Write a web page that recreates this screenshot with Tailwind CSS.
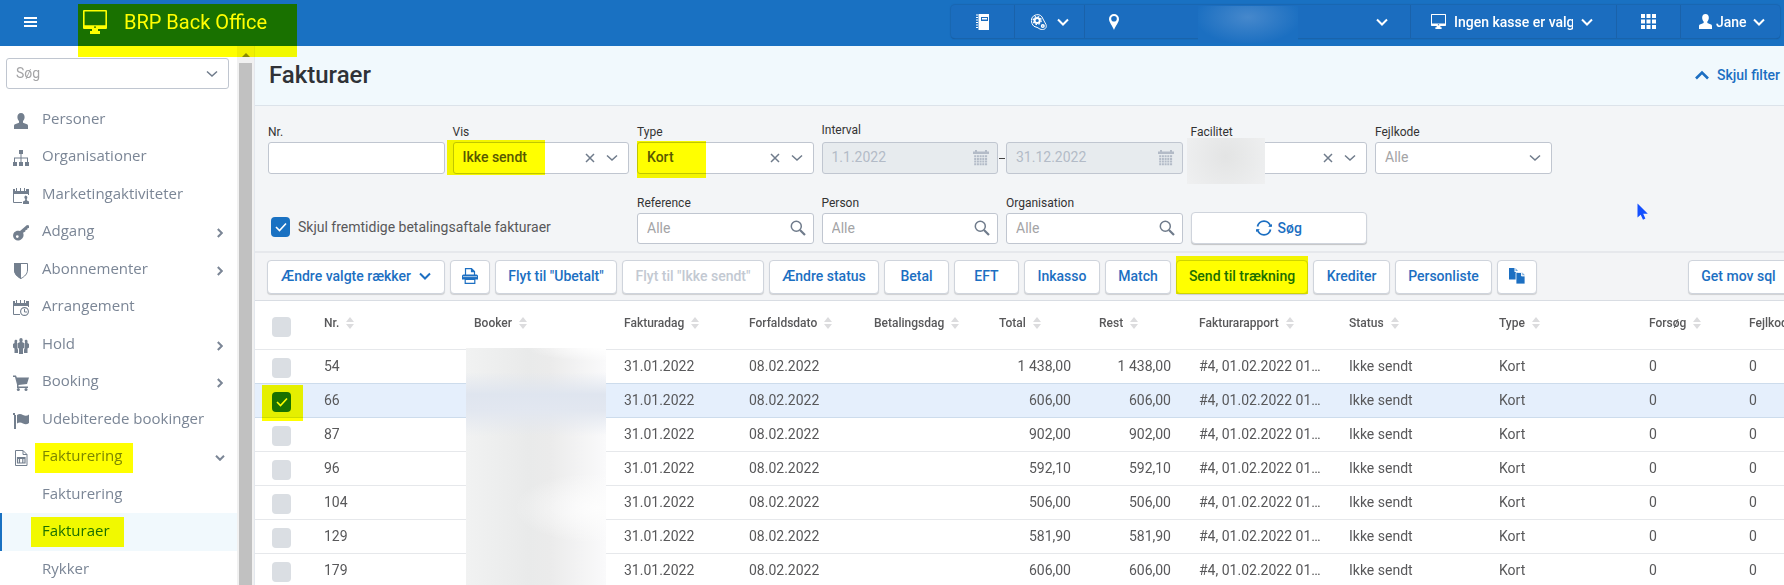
<!DOCTYPE html>
<html lang="da">
<head>
<meta charset="utf-8">
<title>BRP Back Office – Fakturaer</title>
<script src="https://cdn.jsdelivr.net/npm/@tailwindcss/browser@4"></script>
</head>
<body class="flex h-screen flex-col overflow-hidden bg-white font-['Roboto',sans-serif] text-sm text-[#58585a]">

<svg class="hidden" aria-hidden="true">
  <symbol id="chev" viewBox="0 0 12 8"><path d="M1 1.5l5 5 5-5" fill="none" stroke="currentColor" stroke-width="2"/></symbol>
  <symbol id="chev-thin" viewBox="0 0 12 8"><path d="M1 1.5l5 4.5 5-4.5" fill="none" stroke="currentColor" stroke-width="1.5"/></symbol>
  <symbol id="chev-nav" viewBox="0 0 10 6"><path d="M1 .8l4 4 4-4" fill="none" stroke="currentColor" stroke-width="2"/></symbol>
  <symbol id="cross" viewBox="0 0 10 10"><path d="M1 1l8 8M9 1l-8 8" fill="none" stroke="currentColor" stroke-width="1.5"/></symbol>
  <symbol id="check" viewBox="0 0 12 10"><path d="M1 5l3.5 3.5L11 1.5" fill="none" stroke="currentColor" stroke-width="1.6"/></symbol>
  <symbol id="search" viewBox="0 0 16 16"><circle cx="6.3" cy="6.3" r="5" fill="none" stroke="currentColor" stroke-width="1.5"/><path d="M10 10l5 5" stroke="currentColor" stroke-width="2.2"/></symbol>
  <symbol id="monitor" viewBox="0 0 24 24"><path d="M1 0h22q1 0 1 1v17q0 1-1 1h-8v2h2v3H7v-3h2v-2H1q-1 0-1-1V1q0-1 1-1zm.6 1.6v13.6h20.8V1.600zM11 16.500v1.300h2v-1.300z" fill="currentColor" fill-rule="evenodd"/></symbol>
  <symbol id="person" viewBox="0 0 14 16"><path d="M7 0c2.400 0 3.600 1.700 3.600 4 0 1.700-.6 3-1.600 4v1.700l4 1.600c.8.4 1 1 1 2V16H0v-2.700c0-1 .2-1.600 1-2l4-1.600V8C4 7 3.400 5.700 3.400 4 3.400 1.700 4.600 0 7 0z" fill="currentColor"/></symbol>
  <symbol id="cal" viewBox="0 0 16 16"><path d="M0 1.500h2V0h2v1.500h8V0h2v1.500h2V4H0z" fill="currentColor"/><g fill="none" stroke="currentColor" stroke-width="2" stroke-dasharray="2 .7"><path d="M1.200 6.200h13.600M1.200 8.900h13.600M1.200 11.600h13.600M1.200 14.300h13.600"/></g></symbol>
  <symbol id="sort" viewBox="0 0 8 12"><path d="M4 0l4 5H0zM4 12l4-5H0z" fill="currentColor"/></symbol>
  <symbol id="org" viewBox="0 0 16 16"><path d="M6 0h4v4H8.500v3.500H15V12h1v4h-4v-4h2V8.500H8.500V12H10v4H6v-4h1.500V8.500H2V12h2v4H0v-4h1V7.500h6.500V4H6z" fill="currentColor"/></symbol>
  <symbol id="cal-person" viewBox="0 0 16 16"><path d="M.5 2v12.500H9M15.500 2v5M.5 5.500h15" fill="none" stroke="currentColor"/><path d="M0 1h2v2h1V0h1v3h3V0h1v3h3V0h1v3h1V1h3v4H0z" fill="currentColor"/><path d="M12.500 7.500a2 2 0 0 1 1.200 3.500l.3 1.500 2 1V16h-6v-2.500l2-1 .3-1.500a2 2 0 0 1 .2-3.500z" fill="currentColor"/></symbol>
  <symbol id="cal-clock" viewBox="0 0 16 16"><path d="M.5 2v12.500H7M15.500 2v5M.5 5.500h15" fill="none" stroke="currentColor"/><path d="M0 1h2v2h1V0h1v3h3V0h1v3h3V0h1v3h1V1h3v4H0z" fill="currentColor"/><circle cx="11.500" cy="11.500" r="3.900" fill="none" stroke="currentColor" stroke-width="1.100"/><path d="M11.500 9v3h2.500" fill="none" stroke="currentColor"/></symbol>
  <symbol id="key" viewBox="0 0 16 16"><path d="M14 0l2 .5V3l-1.500.3-.3 1.500-1.600.2-.3 1.600-2.200 1.200c1 2.500.3 4.800-1.500 6.200C6.300 16 3.500 16 1.800 14.300-.3 12.300-.5 9.300 1.300 7.300c1.500-1.700 3.700-2 5.700-1.200zM4.300 10.200a1.400 1.400 0 1 0 0 2.800 1.400 1.400 0 0 0 0-2.800z" fill="currentColor" fill-rule="evenodd"/></symbol>
  <symbol id="shield" viewBox="0 0 14 16"><path d="M.5.5h13V7c0 4-3 6.500-6.500 8.500C3.500 13.500.5 11 .5 7z" fill="none" stroke="currentColor"/><path d="M7 0v16C3 14 0 11 0 7V0z" fill="currentColor"/></symbol>
  <symbol id="group" viewBox="0 0 16 16"><path d="M6.300 2a1.700 2 0 1 1 3.400 0c0 .9-.3 1.500-.7 2l2 1v5l-1 .5V16H6v-5.500L5 10V5l2-1c-.4-.5-.7-1.100-.7-2zM1.500 3a1.400 1.500 0 1 1 2.600 1l-.2.800.6.400v5.800l.5.500V15H1.500v-4.500L0 9.500V6l1.500-1zM14.500 3a1.400 1.500 0 1 0-2.600 1l.2.800-.6.400v5.800l-.5.500V15h3.500v-4.500l1.500-1V6l-1.500-1z" fill="currentColor"/></symbol>
  <symbol id="cart" viewBox="0 0 16 16"><path d="M0 .5h3l.8 2H16l-2 6.500-8.500 1v1.500H15V13H4V9.500L2 2H0z" fill="currentColor"/><circle cx="5.300" cy="14.500" r="1.500" fill="currentColor"/><circle cx="13" cy="14.500" r="1.500" fill="currentColor"/></symbol>
  <symbol id="flag" viewBox="0 0 16 16"><path d="M1 2h2v14H1zM0 0h2v2H0zM4 2c2-1.500 4-1.300 6 0 2 1 4 1 6-.5v8.500c-2 1.500-4 1.500-6 .5-2-1.300-4-1.500-6 0z" fill="currentColor"/></symbol>
  <symbol id="doc" viewBox="0 0 14 16"><path d="M1.500.5h7.500l4 4v11H1.500zM9 .5v4h4" fill="none" stroke="currentColor"/><path d="M3.500 7.500h7.500v5.500H3.500zM3 8.500h8.500M5.500 9v4M8.800 9v4" fill="none" stroke="currentColor" stroke-width="1.200"/></symbol>
</svg>

<!-- Top bar -->
<header class="flex h-[46px] shrink-0 items-start bg-[#1971c2] pr-1 text-white">
  <button aria-label="Menu" class="mt-[17px] ml-6 flex w-[13px] flex-col gap-[2px]">
    <span class="h-[2px] w-full bg-white"></span><span class="h-[2px] w-full bg-white"></span><span class="h-[2px] w-full bg-white"></span>
  </button>
  <a href="#" class="relative mt-1 ml-[41px] flex h-[53px] w-[219px] items-start pt-1.5 pl-[5px]">
    <svg class="h-6 w-6"><use href="#monitor"/></svg>
    <span class="ml-[17px] text-xl leading-6">BRP Back Office</span>
    <span class="absolute inset-0 z-10 bg-[#ffff00] mix-blend-multiply"></span>
  </a>
  <div class="mt-[5px] ml-auto flex h-[33px] items-stretch divide-x divide-[#1a62aa] rounded bg-[#1b6dbf] text-sm font-medium shadow-[0_0_1px_1px_#1a66b0,0_1px_1px_#174f8a]">
    <button aria-label="Kassebog" class="flex w-16 items-center justify-center">
      <svg class="h-4 w-3.5" viewBox="0 0 14 16"><path d="M2.500 0H13v16H2.500zM5 3v4h7V3z" fill="currentColor" fill-rule="evenodd"/><path d="M6 4h5v1.500H6z" fill="currentColor"/><path d="M0 1h2M0 3.500h2M0 6h2M0 8.500h2M0 11h2M0 13.500h2" stroke="currentColor" stroke-width="1.200"/></svg>
    </button>
    <button aria-label="Indstillinger" class="flex w-[70px] items-center justify-center gap-2.5">
      <svg class="size-4" viewBox="0 0 16 16" fill="none" stroke="currentColor"><path d="M1 9.500A6 6 0 0 1 5.500 .7C9 .2 11 2 12 5l3 5.500c1 3-.8 5-3.500 5-2 0-3-.5-4.500-1.700L3 12.300C2 11.500 1.300 10.500 1 9.500z"/><circle cx="6.200" cy="6.500" r="2.600" stroke-width="2"/><circle cx="6.200" cy="6.500" r="4" stroke-width="1.300" stroke-dasharray="1.600 1.540"/><circle cx="11.800" cy="12" r="1.300" stroke-width="1.500"/></svg>
      <svg class="h-2 w-3"><use href="#chev"/></svg>
    </button>
    <button aria-label="Facilitet" class="relative flex w-[326px] items-center justify-between pr-[22px] pl-6">
      <svg class="h-4 w-2.5" viewBox="0 0 10 16"><path d="M5 0a5 5 0 0 1 5 5c0 3.500-3.500 6.500-5 11C3.500 11.500 0 8.500 0 5a5 5 0 0 1 5-5zm0 2a2.800 2.800 0 1 0 0 5.600A2.800 2.800 0 0 0 5 2z" fill="currentColor" fill-rule="evenodd"/></svg>
      <svg class="h-2 w-3"><use href="#chev"/></svg>
      <span class="absolute top-px left-[113px] h-[37px] w-[100px] bg-[radial-gradient(ellipse_at_50%_30%,#4688cc,#1b6fc1_75%)]"></span>
    </button>
    <button class="flex w-[206px] items-center pl-5 whitespace-nowrap">
      <svg class="h-[15px] w-[15px] shrink-0"><use href="#monitor"/></svg>
      <span class="ml-2 w-[119px] overflow-hidden text-left">Ingen kasse er valgt</span>
      <svg class="ml-2 h-2 w-3"><use href="#chev"/></svg>
    </button>
    <button aria-label="Apps" class="flex w-16 items-center justify-center">
      <svg class="h-[15px] w-[15px]" viewBox="0 0 15 15" fill="currentColor"><path d="M0 0h4v4H0zM5.500 0h4v4h-4zM11 0h4v4h-4zM0 5.500h4v4H0zM5.500 5.500h4v4h-4zM11 5.500h4v4h-4zM0 11h4v4H0zM5.500 11h4v4h-4zM11 11h4v4h-4z"/></svg>
    </button>
    <button class="flex w-[99px] items-center pl-[18px]">
      <svg class="h-[15px] w-[13px]"><use href="#person"/></svg>
      <span class="ml-1">Jane</span>
      <svg class="ml-1.5 h-2 w-3"><use href="#chev"/></svg>
    </button>
  </div>
</header>

<div class="flex min-h-0 flex-1">
  <!-- Sidebar -->
  <aside class="flex w-[255px] shrink-0 border-r border-[#e4e8ee]">
    <div class="min-w-0 flex-1 overflow-hidden">
      <div class="relative mt-3 mr-2 ml-1.5">
        <select aria-label="Søg" class="block h-[31px] w-full appearance-none rounded-[3px] border border-[#c0c6d0] bg-white pb-0.5 pl-[9px] text-[#a4a4a6]"><option>Søg</option></select>
        <svg class="pointer-events-none absolute top-3 right-[11px] h-2 w-3 text-[#6f7b8b]"><use href="#chev-thin"/></svg>
      </div>
      <nav class="mt-3 font-['Open_Sans',sans-serif] text-[15px] text-[#7b8696]">
        <ul id="nav"></ul>
      </nav>
    </div>
    <div class="flex w-[17px] flex-col items-center bg-[#f1f1f1] pt-[7px]">
      <svg class="h-1 w-2" viewBox="0 0 8 4"><path d="M4 0l4 4H0z" fill="#8a8a8a"/></svg>
      <div class="mt-[6px] w-[13px] flex-1 bg-[#c1c1c1]"></div>
    </div>
  </aside>

  <main class="relative min-w-0 flex-1 overflow-hidden">
    <div class="flex h-[60px] items-center justify-between border-b border-[#dce3ea] bg-[#f1f9fd] pr-1 pb-0.5 pl-3.5">
      <h1 class="text-2xl font-medium text-[#2f3237]">Fakturaer</h1>
      <button class="flex items-center gap-2 font-medium text-[#1c6fc2]">
        <svg class="h-2.5 w-3.5 rotate-180" viewBox="0 0 14 10"><path d="M1 1.500l6 6 6-6" fill="none" stroke="currentColor" stroke-width="2.600"/></svg>
        Skjul filter
      </button>
    </div>

    <!-- Filters -->
    <form class="grid grid-cols-8 gap-x-2 gap-y-[21px] border-b-2 border-[#e6e8ec] bg-[#f3f5f7] pt-[18px] pr-12 pb-[7px] pl-[13px]" onsubmit="return false">
      <div class="flex flex-col gap-0.5">
        <label for="nr" class="text-xs leading-4 text-[#333]">Nr.</label>
        <input id="nr" class="h-8 w-full rounded-[3px] border border-[#c0c6d0] bg-white px-2">
      </div>
      <div class="flex flex-col gap-0.5">
        <label for="vis" class="text-xs leading-4 text-[#333]">Vis</label>
        <div class="relative">
          <select id="vis" class="block h-8 w-full appearance-none rounded-[3px] border border-[#c0c6d0] bg-white pb-0.5 pl-[9px] font-medium"><option>Ikke sendt</option></select>
          <button aria-label="Ryd" class="absolute top-[11px] right-[34px] text-[#6f7b8b]"><svg class="size-2.5"><use href="#cross"/></svg></button>
          <svg class="pointer-events-none absolute top-3 right-[11px] h-2 w-3 text-[#6f7b8b]"><use href="#chev-thin"/></svg>
          <span class="absolute -top-0.5 -left-1.5 h-[35px] w-[98px] bg-[#ffff00] mix-blend-multiply"></span>
        </div>
      </div>
      <div class="flex flex-col gap-0.5">
        <label for="type" class="text-xs leading-4 text-[#333]">Type</label>
        <div class="relative">
          <select id="type" class="block h-8 w-full appearance-none rounded-[3px] border border-[#c0c6d0] bg-white pb-0.5 pl-[9px] font-medium"><option>Kort</option></select>
          <button aria-label="Ryd" class="absolute top-[11px] right-[34px] text-[#6f7b8b]"><svg class="size-2.5"><use href="#cross"/></svg></button>
          <svg class="pointer-events-none absolute top-3 right-[11px] h-2 w-3 text-[#6f7b8b]"><use href="#chev-thin"/></svg>
          <span class="absolute -top-px left-0 h-[37px] w-[69px] bg-[#ffff00] mix-blend-multiply"></span>
        </div>
      </div>
      <div class="col-span-2 -mt-0.5 flex flex-col gap-1">
        <label for="fra" class="text-xs leading-4 text-[#333]">Interval</label>
        <div class="grid grid-cols-[1fr_8px_1fr] items-center">
          <div class="relative">
            <input id="fra" disabled value="1.1.2022" class="block h-8 w-full rounded-[3px] border border-[#c0c6d0] bg-[#e7ebee] px-[9px] pb-0.5 text-[#b3bbc7]">
            <svg class="absolute top-2 right-[9px] size-4 text-[#b3bbc7]"><use href="#cal"/></svg>
          </div>
          <span class="mx-auto h-px w-1.5 bg-[#444]"></span>
          <div class="relative">
            <input aria-label="Til" disabled value="31.12.2022" class="block h-8 w-full rounded-[3px] border border-[#c0c6d0] bg-[#e7ebee] px-[9px] pb-0.5 text-[#b3bbc7]">
            <svg class="absolute top-2 right-[9px] size-4 text-[#b3bbc7]"><use href="#cal"/></svg>
          </div>
        </div>
      </div>
      <div class="flex flex-col gap-0.5">
        <label for="fac" class="text-xs leading-4 text-[#333]">Facilitet</label>
        <div class="relative">
          <select id="fac" class="block h-8 w-full appearance-none rounded-[3px] border border-[#c0c6d0] bg-white"></select>
          <button aria-label="Ryd" class="absolute top-[11px] right-[34px] text-[#6f7b8b]"><svg class="size-2.5"><use href="#cross"/></svg></button>
          <svg class="pointer-events-none absolute top-3 right-[11px] h-2 w-3 text-[#6f7b8b]"><use href="#chev-thin"/></svg>
          <span class="absolute -top-1 -left-1 h-[46px] w-[78px] bg-[radial-gradient(circle_at_50%_40%,#e3e4e4,#eff0f1)]"></span>
        </div>
      </div>
      <div class="flex flex-col gap-0.5">
        <label for="fejl" class="text-xs leading-4 text-[#333]">Fejlkode</label>
        <div class="relative">
          <select id="fejl" class="block h-8 w-full appearance-none rounded-[3px] border border-[#c0c6d0] bg-white pb-0.5 pl-[9px] text-[#a4a4a6]"><option>Alle</option></select>
          <svg class="pointer-events-none absolute top-3 right-[11px] h-2 w-3 text-[#6f7b8b]"><use href="#chev-thin"/></svg>
        </div>
      </div>

      <label class="col-span-2 col-start-1 mb-[7px] flex items-center gap-2 self-end pl-[3px]">
        <span class="relative flex h-5 w-[19px] items-center justify-center text-white">
          <input type="checkbox" checked class="absolute inset-0 h-5 w-[19px] appearance-none rounded bg-[#1971c2]">
          <svg class="relative h-2.5 w-3"><use href="#check"/></svg>
        </span>
        Skjul fremtidige betalingsaftale fakturaer
      </label>
      <div class="flex flex-col gap-0.5">
        <label for="ref" class="text-xs leading-4 text-[#333]">Reference</label>
        <div class="relative">
          <input id="ref" placeholder="Alle" class="block h-[31px] w-full rounded-[3px] border border-[#c0c6d0] bg-white px-[9px] pb-0.5 placeholder:text-[#a4a4a6]">
          <svg class="absolute top-[7px] right-2 size-4 text-[#6f7b8b]"><use href="#search"/></svg>
        </div>
      </div>
      <div class="flex flex-col gap-0.5">
        <label for="pers" class="text-xs leading-4 text-[#333]">Person</label>
        <div class="relative">
          <input id="pers" placeholder="Alle" class="block h-[31px] w-full rounded-[3px] border border-[#c0c6d0] bg-white px-[9px] pb-0.5 placeholder:text-[#a4a4a6]">
          <svg class="absolute top-[7px] right-2 size-4 text-[#6f7b8b]"><use href="#search"/></svg>
        </div>
      </div>
      <div class="flex flex-col gap-0.5">
        <label for="orgf" class="text-xs leading-4 text-[#333]">Organisation</label>
        <div class="relative">
          <input id="orgf" placeholder="Alle" class="block h-[31px] w-full rounded-[3px] border border-[#c0c6d0] bg-white px-[9px] pb-0.5 placeholder:text-[#a4a4a6]">
          <svg class="absolute top-[7px] right-2 size-4 text-[#6f7b8b]"><use href="#search"/></svg>
        </div>
      </div>
      <button class="flex h-8 items-center justify-center gap-1.5 self-end rounded border border-[#cfd4dc] bg-white font-medium text-[#1c6fc2] shadow-[0_1px_1px_rgba(0,0,0,.2)]">
        <svg class="size-4" viewBox="0 0 16 16" fill="none" stroke="currentColor" stroke-width="1.800"><path d="M1.500 6.500a6.600 6.600 0 0 1 13 0M14.500 9.500a6.600 6.600 0 0 1-13 0"/><path d="M12 6.800h4V4zM4 9.200H0V12z" fill="currentColor" stroke="none"/></svg>
        Søg
      </button>
    </form>

    <!-- Actions -->
    <div id="actions" class="flex gap-[5px] border-b border-[#d9dde3] bg-[#f3f4f6] pt-[7px] pb-1.5 pl-3 font-medium whitespace-nowrap text-[#1c6fc2] [&>button]:flex [&>button]:h-[34px] [&>button]:shrink-0 [&>button]:items-center [&>button]:justify-center [&>button]:rounded [&>button]:border [&>button]:border-[#cfd4dc] [&>button]:bg-white [&>button]:pb-0.5 [&>button]:shadow-[0_1px_1px_rgba(0,0,0,.15)]">
      <button class="w-[178px] gap-2">Ændre valgte rækker <svg class="h-2 w-3"><use href="#chev"/></svg></button>
      <button aria-label="Udskriv" class="w-10">
        <svg class="size-4" viewBox="0 0 16 16"><path d="M3.500 7V.6h6l3 3V7M9.500.6v3h3" fill="none" stroke="currentColor" stroke-width="1.200"/><path d="M0 8q0-1.500 1.500-1.500h13Q16 6.500 16 8v3.500H0z" fill="currentColor"/><path d="M1 8.600h14" stroke="#fff" stroke-opacity=".6"/><path d="M3.200 11.500h9.600v3.900H3.200z" fill="#fff" stroke="currentColor" stroke-width="1.200"/></svg>
      </button>
      <button class="w-[122px]">Flyt til "Ubetalt"</button>
      <button disabled class="w-[142px] text-[#c3c9d2]">Flyt til "Ikke sendt"</button>
      <button class="w-[110px]">Ændre status</button>
      <button class="w-[65px]">Betal</button>
      <button class="w-[65px]">EFT</button>
      <button class="w-[76px]">Inkasso</button>
      <button class="w-[66px]">Match</button>
      <button class="relative w-[132px]">Send til trækning<span class="absolute -inset-x-px -top-[5px] -bottom-px bg-[#ffff00] mix-blend-multiply"></span></button>
      <button class="w-[77px]">Krediter</button>
      <button class="w-[97px]">Personliste</button>
      <button aria-label="Kopier" class="w-10">
        <svg class="size-4" viewBox="0 0 16 16"><path d="M0 0h5.500v4H9v7.500H0z" fill="currentColor"/><path d="M6.500 0L9 3H6.500z" fill="currentColor" fill-opacity=".6"/><path d="M7 4.500h5.500V8H16v8H7z" fill="currentColor" stroke="#fff" stroke-width=".8"/><path d="M13.300 4.500L16 7.200h-2.700z" fill="currentColor" fill-opacity=".6"/></svg>
      </button>
      <button class="mr-[-17px] ml-auto w-[113px] pr-3">Get mov sql</button>
    </div>

    <!-- Invoice table -->
    <div class="relative overflow-hidden">
      <table class="w-[1575px] table-fixed border-separate border-spacing-0 text-left">
        <colgroup id="cols"></colgroup>
        <thead><tr id="head" class="h-[49px] text-xs font-medium [&>th]:border-b [&>th]:border-[#e6e8eb]"></tr></thead>
        <tbody id="rows"></tbody>
      </table>
      <!-- Customer names are masked -->
      <div class="absolute top-[47px] left-[211px] h-[238px] w-[140px] bg-[linear-gradient(90deg,#f1f2f2,#e9eaea_45%,#ebebeb_60%,#fafafb)]">
        <div class="h-6 bg-[radial-gradient(ellipse_at_100%_0%,#ffffff,transparent_40%)]"></div>
        <div class="h-16 bg-[linear-gradient(180deg,transparent,#dfe5ef_35%,#e2e7f0_60%,transparent)]"></div>
        <div class="mt-4 h-28 bg-[radial-gradient(ellipse_at_95%_50%,#fdfdfd,transparent_45%)]"></div>
      </div>
    </div>

    <svg class="absolute top-[157px] left-[1382px] h-[18px] w-3" viewBox="0 0 12 18"><path d="M.5.500v14l3.200-2.800 2.300 5 2.400-1.200-2.200-4.700h4.600z" fill="#1450ff"/></svg>
  </main>
</div>

<script>
const nav = [
  ['person', 'Personer'], ['org', 'Organisationer'], ['cal-person', 'Marketingaktiviteter'],
  ['key', 'Adgang', 'r'], ['shield', 'Abonnementer', 'r'], ['cal-clock', 'Arrangement'],
  ['group', 'Hold', 'r'], ['cart', 'Booking', 'r'], ['flag', 'Udebiterede bookinger'],
  ['doc', 'Fakturering', 'd'], ['', 'Fakturering'], ['', 'Fakturaer', 'active'], ['', 'Rykker']
];
document.getElementById('nav').innerHTML = nav.map(([icon, text, kind]) => {
  const active = kind === 'active';
  const mark = kind === 'd'
    ? '<span class="absolute -left-[7px] -right-[11px] top-[5px] h-[30px] bg-[#ffff00] mix-blend-multiply"></span>'
    : active ? '<span class="absolute -right-3.5 -left-[11px] top-[4px] h-[30px] bg-[#ffff00] mix-blend-multiply"></span>' : '';
  const arrow = kind === 'r'
    ? '<svg class="h-1.5 w-2.5 -rotate-90"><use href="#chev-nav"/></svg>'
    : kind === 'd' ? '<svg class="h-1.5 w-2.5"><use href="#chev-nav"/></svg>' : '';
  return `<li class="h-[37px] even:h-[38px]"><a href="#" class="flex h-full items-center border-l-2 pr-3 pl-[11px] ${active ? 'border-[#1971c2] bg-[#f1f9fd] text-[#1b6fc0]' : 'border-transparent'}">
    <span class="mt-0.5 w-[29px] text-[#737f8e]">${icon ? `<svg class="size-4"><use href="#${icon}"/></svg>` : ''}</span>
    <span class="relative flex h-full items-center pb-0.5">${text}${mark}</span><span class="mt-0.5 ml-auto">${arrow}</span></a></li>`;
}).join('');

const cols = [['Nr.', 150], ['Booker', 150], ['Fakturadag', 125], ['Forfaldsdato', 125], ['Betalingsdag', 125], ['Total', 100], ['Rest', 100], ['Fakturarapport', 150], ['Status', 150], ['Type', 150], ['Forsøg', 100], ['Fejlkode', 95]];
document.getElementById('cols').innerHTML = '<col style="width:55px">' + cols.map(c => `<col style="width:${c[1]}px">`).join('');
document.getElementById('head').innerHTML =
  '<th class="pt-1 pl-[17px]"><input type="checkbox" aria-label="Vælg alle" class="block h-5 w-[19px] appearance-none rounded bg-[#dadee3]"></th>' +
  cols.map(c => `<th class="px-3.5 pb-1 font-medium whitespace-nowrap"><span class="flex items-center gap-[7px]">${c[0]}<svg class="h-3 w-2 text-[#dcdcde]"><use href="#sort"/></svg></span></th>`).join('');

const rows = [['54', '1 438,00'], ['66', '606,00'], ['87', '902,00'], ['96', '592,10'], ['104', '506,00'], ['129', '581,90'], ['179', '606,00']];
const td = (v, cls = '') => `<td class="truncate px-3.5 pb-0.5 ${cls}">${v}</td>`;
document.getElementById('rows').innerHTML = rows.map(([nr, sum]) => {
  const sel = nr === '66';
  return `<tr class="h-[34px] [&>td]:border-b ${sel ? 'bg-[#e5effc] [&>td]:border-[#cddcec]' : nr === '54' ? '[&>td]:border-[#cddcec]' : '[&>td]:border-[#e6e8eb]'}">
    <td class="relative pl-[17px]"><span class="relative mt-0.5 flex h-5 w-[19px] items-center justify-center text-white"><input type="checkbox" aria-label="Vælg ${nr}" ${sel ? 'checked' : ''} class="absolute inset-0 h-5 w-[19px] appearance-none rounded bg-[#dadee3] checked:bg-[#1971c2]">${sel ? '<svg class="relative h-2.5 w-3"><use href="#check"/></svg>' : ''}</span>${sel ? '<span class="absolute top-px left-[7px] h-9 w-[36px] min-w-[41px] bg-[#ffff00] mix-blend-multiply"></span>' : ''}</td>`
    + td(nr) + td('') + td('31.01.2022') + td('08.02.2022') + td('') + td(sum, 'text-right') + td(sum, 'text-right')
    + td('#4, 01.02.2022 01:02:15') + td('Ikke sendt') + td('Kort') + td('0') + td('0') + '</tr>';
}).join('');
</script>
</body>
</html>
